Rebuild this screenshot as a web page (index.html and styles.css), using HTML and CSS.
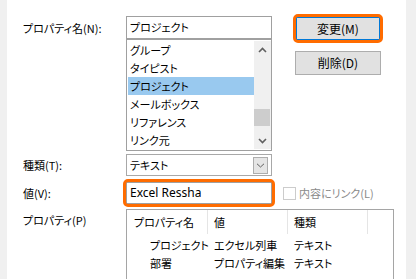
FILE: index.html
```html
<!DOCTYPE html>
<html lang="ja">
<head>
<meta charset="utf-8">
<title>プロパティ</title>
<link rel="stylesheet" href="styles.css">
</head>
<body>
<div class="window">
  <div class="edge-left"></div>
  <div class="panel">
    <div class="form">
      <div class="lbl row1">プロパティ名(N):</div>
      <div class="textbox row1">プロジェクト</div>
      <div class="buttons">
        <button class="btn btn-default focus-ring">変更(M)</button>
        <button class="btn">削除(D)</button>
      </div>

      <div class="listbox">
        <ul class="items">
          <li>グループ</li>
          <li>タイピスト</li>
          <li class="selected">プロジェクト</li>
          <li>メールボックス</li>
          <li>リファレンス</li>
          <li>リンク元</li>
        </ul>
        <div class="scrollbar">
          <div class="sb-btn">
            <svg width="9" height="6" viewBox="0 0 9 6"><polyline points="1,5 4.5,1.5 8,5" fill="none" stroke="#606060" stroke-width="1.6"/></svg>
          </div>
          <div class="sb-track"><div class="sb-thumb"></div></div>
          <div class="sb-btn">
            <svg width="9" height="6" viewBox="0 0 9 6"><polyline points="1,1 4.5,4.5 8,1" fill="none" stroke="#606060" stroke-width="1.6"/></svg>
          </div>
        </div>
      </div>

      <div class="lbl row3">種類(T):</div>
      <div class="combo row3">
        <span class="combo-text">テキスト</span>
        <span class="combo-btn">
          <svg width="9" height="5" viewBox="0 0 9 5"><polyline points="1,0.8 4.5,4 8,0.8" fill="none" stroke="#606060" stroke-width="1"/></svg>
        </span>
      </div>

      <div class="lbl row4">値(V):</div>
      <div class="textbox value row4 focus-ring">Excel Ressha</div>
      <div class="check row4">
        <span class="checkbox"></span>
        <span class="check-label">内容にリンク(L)</span>
      </div>

      <div class="lbl row5 lbl-top">プロパティ(P)</div>
      <div class="listview row5">
        <div class="lv-header">
          <div class="lv-h first">プロパティ名</div>
          <div class="lv-h">値</div>
          <div class="lv-h">種類</div>
        </div>
        <div class="lv-row">
          <div class="lv-c first">プロジェクト</div>
          <div class="lv-c">エクセル列車</div>
          <div class="lv-c">テキスト</div>
        </div>
        <div class="lv-row">
          <div class="lv-c first">部署</div>
          <div class="lv-c">プロパティ編集</div>
          <div class="lv-c">テキスト</div>
        </div>
      </div>
    </div>
  </div>
  <div class="edge-right"></div>
</div>
</body>
</html>
```

FILE: styles.css
```css
html, body {
  margin: 0;
  padding: 0;
}

body {
  width: 416px;
  height: 279px;
  overflow: hidden;
  background: #ffffff;
  color: #000000;
  font-family: "Noto Sans CJK JP", "Noto Sans", sans-serif;
  font-size: 11px;
  line-height: 16px;
  font-feature-settings: "palt";
}

.window {
  display: flex;
  height: 279px;
}

.edge-left {
  flex: none;
  width: 7px;
  background: #f0f0f0;
}

.edge-right {
  flex: none;
  width: 10px;
  background: #f0f0f0;
}

.panel {
  flex: 1;
  padding: 16px 0 0 16px;
  overflow: hidden;
}

.form {
  display: grid;
  grid-template-columns: 103px 146px 23px 86px 1fr;
  align-items: start;
}

/* labels */
.lbl {
  grid-column: 1;
  align-self: center;
  white-space: nowrap;
}

.lbl-top {
  align-self: start;
  margin-top: 8px;
}

.row1 { grid-row: 1; }
.row3 { grid-row: 3; }
.row4 { grid-row: 4; }
.row5 { grid-row: 5; }

/* text boxes */
.textbox {
  grid-column: 2;
  box-sizing: border-box;
  height: 23px;
  border: 1px solid #a0a0a0;
  padding-left: 3px;
  line-height: 21px;
  white-space: nowrap;
}

.textbox.value {
  height: 22px;
  line-height: 20px;
  margin-top: 6px;
  font-family: "Noto Sans", "Noto Sans CJK JP", sans-serif;
  font-size: 12px;
  font-feature-settings: normal;
}

.focus-ring {
  position: relative;
}

.focus-ring::after {
  content: "";
  position: absolute;
  top: -4px;
  left: -4px;
  right: -4px;
  bottom: -4px;
  border: 3px solid #ff6c00;
  border-radius: 5px;
  pointer-events: none;
}

/* buttons */
.buttons {
  grid-column: 4;
  grid-row: 1 / span 2;
  display: flex;
  flex-direction: column;
  gap: 10px;
}

.btn {
  box-sizing: border-box;
  width: 86px;
  height: 24px;
  padding: 0;
  border: 1px solid #adadad;
  background: #e1e1e1;
  color: #000000;
  font: inherit;
  font-size: 12px;
  font-feature-settings: "palt";
  line-height: 20px;
}

.btn-default {
  height: 25px;
  border: 2px solid #0078d7;
}

/* list box */
.listbox {
  grid-column: 2;
  grid-row: 2;
  box-sizing: border-box;
  height: 112px;
  border: 1px solid #a0a0a0;
  padding: 1px 0 1px 1px;
  display: flex;
}

.items {
  width: 126px;
  margin: 0;
  padding: 0;
  list-style: none;
  overflow: hidden;
}

.items li {
  height: 18px;
  line-height: 18px;
  padding-left: 2px;
  white-space: nowrap;
}

.items li.selected {
  background: #99c9ef;
}

.scrollbar {
  width: 17px;
  display: flex;
  flex-direction: column;
  background: #f0f0f0;
}

.sb-btn {
  height: 17px;
  display: flex;
  align-items: center;
  justify-content: center;
}

.sb-track {
  flex: 1;
  padding-top: 51px;
}

.sb-thumb {
  height: 17px;
  margin: 0 1px 0 0;
  background: #cdcdcd;
}

/* combo box */
.combo {
  grid-column: 2;
  box-sizing: border-box;
  height: 22px;
  margin-top: 3px;
  border: 1px solid #a8a8a8;
  display: flex;
}

.lbl.row3 {
  margin-top: 3px;
}

.lbl.row4 {
  margin-top: 6px;
}

.combo-text {
  flex: 1;
  padding-left: 3px;
  line-height: 20px;
  white-space: nowrap;
}

.combo-btn {
  box-sizing: border-box;
  width: 15px;
  height: 17px;
  margin: 2px 3px 0 0;
  border: 1px solid #adadad;
  background: #e5e5e5;
  display: flex;
  align-items: center;
  justify-content: center;
}

/* checkbox */
.check {
  grid-column: 3 / span 3;
  margin-top: 6px;
  margin-left: 11px;
  height: 22px;
  display: flex;
  align-items: center;
  gap: 3px;
}

.checkbox {
  box-sizing: border-box;
  width: 13px;
  height: 13px;
  border: 1px solid #cccccc;
  background: #ffffff;
}

.check-label {
  color: #8a8a8a;
  white-space: nowrap;
}

/* list view */
.listview {
  grid-column: 2 / span 4;
  box-sizing: border-box;
  width: 268px;
  height: 90px;
  margin-top: 5px;
  border: 1px solid #a5a5a5;
}

.lv-header {
  display: grid;
  grid-template-columns: 81px 80px 80px;
  height: 24px;
  margin-bottom: 2px;
}

.lv-h {
  box-sizing: border-box;
  border-right: 1px solid #e5e5e5;
  padding-left: 6px;
  line-height: 24px;
  white-space: nowrap;
}

.lv-h.first {
  padding-left: 7px;
}

.lv-row {
  display: grid;
  grid-template-columns: 81px 80px 80px;
  height: 18px;
}

.lv-c {
  padding-left: 6px;
  line-height: 18px;
  white-space: nowrap;
}

.lv-c.first {
  padding-left: 23px;
}
```
